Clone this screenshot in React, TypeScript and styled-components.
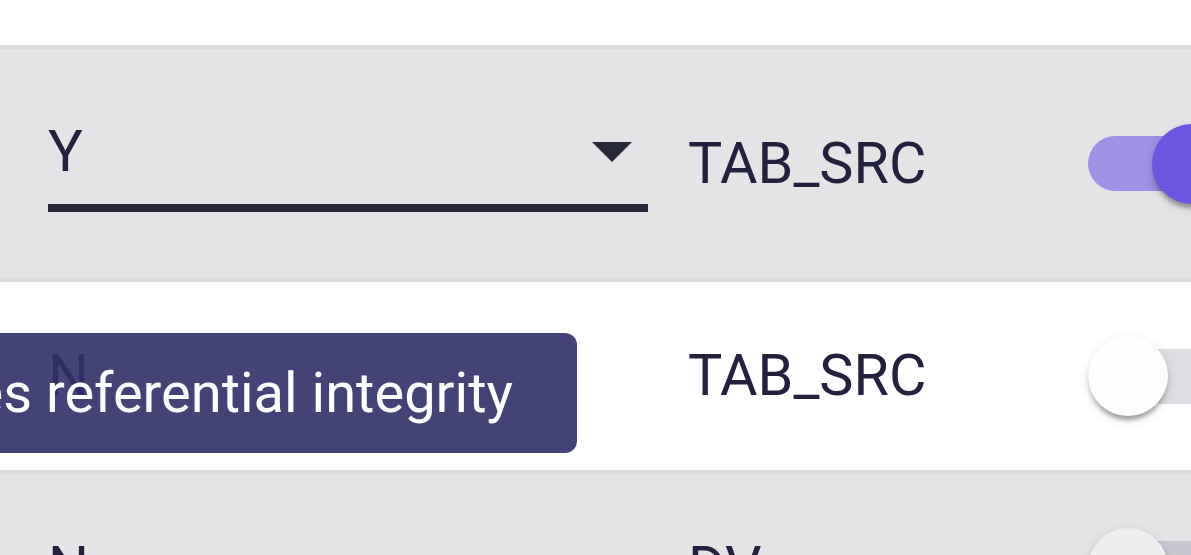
import React from 'react';
import styled, { createGlobalStyle } from 'styled-components';

const GlobalStyle = createGlobalStyle`
  html, body {
    margin: 0;
    padding: 0;
    background: #ffffff;
  }
  body {
    font-family: Roboto, "Noto Sans", "Liberation Sans", sans-serif;
    color: #23223e;
    overflow: hidden;
  }
`;

const Page = styled.div`
  width: 100vw;
  height: 100vh;
  overflow: hidden;
  padding-top: 45px;
  box-sizing: border-box;
`;

const Row = styled.div<{ $shaded?: boolean }>`
  display: grid;
  grid-template-columns: 600px 360px 1fr;
  column-gap: 40px;
  align-items: center;
  padding: 54px 0 54px 48px;
  border-top: 4px solid #dcdce0;
  background: ${(p) => (p.$shaded ? '#e4e4e7' : '#ffffff')};
`;

const Cell = styled.div`
  position: relative;
  font-size: 57.5px;
  line-height: 58px;
  color: #23223e;
  white-space: nowrap;
`;

const SelectField = styled.div`
  height: 121px;
  width: 600px;
`;

const SelectInput = styled.div`
  box-sizing: border-box;
  height: 109px;
  padding-top: 13px;
  border-bottom: 8px solid #272838;
  display: flex;
  align-items: flex-start;
  justify-content: space-between;
`;

const SelectValue = styled.span`
  font-size: 58px;
  line-height: 70px;
  color: #23223e;
`;

const DropIcon = styled.svg`
  width: 40px;
  height: 20px;
  margin-top: 26px;
  margin-right: 16px;
  fill: #272838;
`;

const SwitchRoot = styled.div`
  position: relative;
  width: 150px;
  height: 80px;
`;

const Track = styled.div<{ $on?: boolean }>`
  position: absolute;
  left: 0;
  top: 12.5px;
  width: 140px;
  height: 55px;
  border-radius: 28px;
  background: ${(p) => (p.$on ? 'rgba(108, 85, 224, 0.58)' : 'rgba(30, 28, 70, 0.15)')};
`;

const Knob = styled.div<{ $on?: boolean; $muted?: boolean }>`
  position: absolute;
  top: 0;
  left: ${(p) => (p.$on ? '64px' : '0')};
  width: 80px;
  height: 80px;
  border-radius: 50%;
  background: ${(p) => (p.$on ? '#6c55e0' : p.$muted ? '#efeff0' : '#fdfdfd')};
  box-shadow: 0 8px 4px -4px rgba(0, 0, 0, 0.2), 0 4px 4px 0 rgba(0, 0, 0, 0.14),
    0 4px 12px 0 rgba(0, 0, 0, 0.12);
`;

// tooltip hangs off the value cell, its right edge at x 577
const Tooltip = styled.div`
  position: absolute;
  top: -14px;
  right: 71px;
  box-sizing: border-box;
  height: 120px;
  padding: 0 64px;
  display: flex;
  align-items: center;
  border-radius: 12px;
  background: rgba(48, 47, 104, 0.9);
  color: #ffffff;
  font-size: 56px;
  line-height: 1;
  white-space: nowrap;
`;

type SwitchProps = { on?: boolean; muted?: boolean };

const Switch = ({ on, muted }: SwitchProps) => (
  <SwitchRoot>
    <Track $on={on} />
    <Knob $on={on} $muted={muted} />
  </SwitchRoot>
);

export default function App() {
  return (
    <>
      <GlobalStyle />
      <Page>
        <Row $shaded>
          <SelectField>
            <SelectInput>
              <SelectValue>Y</SelectValue>
              <DropIcon viewBox="7 10 10 5">
                <path d="M7 10l5 5 5-5z" />
              </DropIcon>
            </SelectInput>
          </SelectField>
          <Cell>TAB_SRC</Cell>
          <Switch on />
        </Row>
        <Row>
          <Cell>
            N
            <Tooltip>Enforces referential integrity</Tooltip>
          </Cell>
          <Cell>TAB_SRC</Cell>
          <Switch />
        </Row>
        <Row $shaded>
          <Cell>N</Cell>
          <Cell>DV</Cell>
          <Switch muted />
        </Row>
      </Page>
    </>
  );
}
